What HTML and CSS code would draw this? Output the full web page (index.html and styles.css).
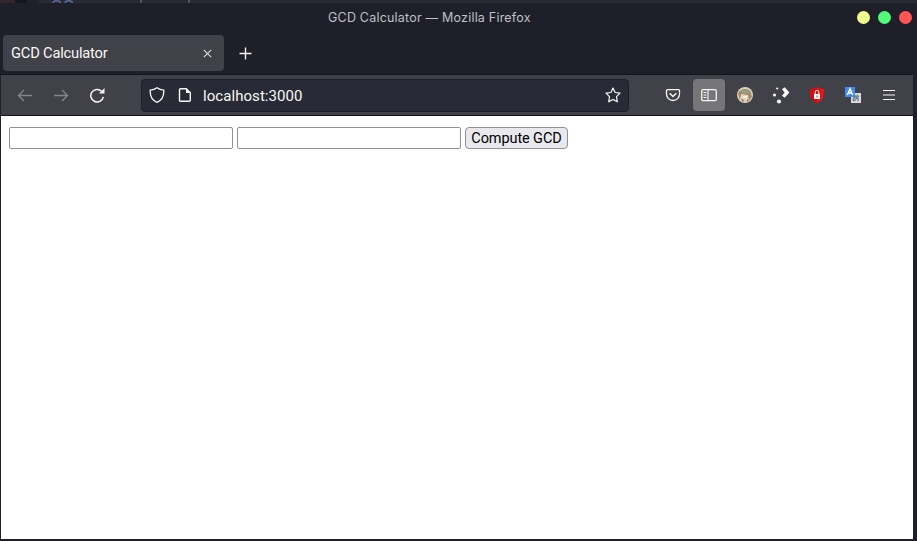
FILE: index.html
```html
<!DOCTYPE html>
<html lang="en">
<head>
<meta charset="utf-8">
<title>GCD Calculator</title>
<link rel="stylesheet" href="styles.css">
</head>
<body>
<div class="backdrop">
  <svg width="917" height="3" viewBox="0 0 917 3" fill="none">
    <rect width="15" height="3" fill="#35252a"/><rect x="15" width="12" height="3" fill="#15161b"/><rect x="27" width="12" height="3" fill="#20212b"/>
    <path d="M53 3c.5-3 7-3 7.500 0M65 3c.5-3 7-3 7.500 0" stroke="#5b6aa0" stroke-width="1.500"/>
    <path d="M141 0v3M189 0v3" stroke="#55564f" stroke-width="2"/>
  </svg>
</div>
<div class="window">
  <header class="titlebar">
    <span class="title">GCD Calculator — Mozilla Firefox</span>
    <div class="controls"><i class="dot yellow"></i><i class="dot green"></i><i class="dot red"></i></div>
  </header>
  <div class="tabs">
    <div class="tab"><span class="tab-label">GCD Calculator</span>
      <svg width="9" height="9" viewBox="0 0 9 9"><path d="M.8.8l7.400 7.400M8.200.8L.8 8.200" stroke="#dddddb" stroke-width="1.100"/></svg>
    </div>
    <svg class="plus" width="13" height="13" viewBox="0 0 13 13"><path d="M6.500 .5v12M.5 6.500h12" stroke="#f4f4f0" stroke-width="1.400"/></svg>
  </div>
  <nav class="toolbar">
    <div class="slot dim"><svg width="16" height="16" viewBox="0 0 16 16"><path d="M15 8.500H1.500M7 3L1.500 8.500 7 14"/></svg></div>
    <div class="slot dim"><svg width="16" height="16" viewBox="0 0 16 16"><path d="M1 8.500h13.500M9 3l5.500 5.500L9 14"/></svg></div>
    <div class="slot"><svg width="16" height="16" viewBox="0 0 16 16"><path d="M14.300 9.800A6.300 6.300 0 1 1 12.600 4.300" stroke-width="1.500"/><path d="M15.500 1v5.500H10z" fill="#f8f8f2" stroke="none"/></svg></div>
    <div class="urlbar">
      <svg width="16" height="16" viewBox="0 0 16 16"><path d="M8 .8C6 2.300 3.600 3 1.200 3.200 1 8.500 2.500 13.300 8 15.300c5.500-2 7-6.800 6.800-12.100C12.400 3 10 2.300 8 .8z" stroke-width="1.300"/></svg>
      <svg class="page-icon" width="16" height="16" viewBox="0 0 16 16"><path d="M3.500 1.700h5.800l4 4v7.600a1 1 0 0 1-1 1H3.500a1 1 0 0 1-1-1V2.700a1 1 0 0 1 1-1z" stroke-width="1.400"/><path d="M9 1.300V6h4.700z" fill="#f8f8f2" stroke="none"/></svg>
      <span class="url">localhost:3000</span>
      <svg class="star" width="16" height="16" viewBox="0 0 16 16"><path d="M8 1l2.100 4.500 4.900.7-3.500 3.500.8 5.100L8 12.400l-4.300 2.400.8-5.100L1 6.200l4.900-.7z" stroke-width="1.200" stroke-linejoin="round"/></svg>
    </div>
    <div class="actions">
      <div class="slot"><svg width="16" height="16" viewBox="0 0 16 16"><path d="M2.500 2.600h11a1 1 0 0 1 1 1V7a6.500 6.500 0 0 1-13 0V3.600a1 1 0 0 1 1-1z"/><path d="M4.700 6.300L8 9.500l3.300-3.200" stroke-width="1.500"/></svg></div>
      <div class="slot selected"><svg width="16" height="16" viewBox="0 0 16 16"><rect x=".7" y="2.700" width="14.600" height="11" rx="1.500"/><path d="M7 3v10.500M2.500 5.500h3M2.500 8h3M2.500 10.500h3" stroke-width="1.100"/></svg></div>
      <div class="slot"><svg width="16" height="16" viewBox="0 0 16 16" stroke="none"><circle cx="8" cy="8" r="8" fill="#ddd3bd"/><path d="M1 7C2 1 13 0 14 6l1 4-3 3-1-5-7-1-1 6z" fill="#a08b64"/><path d="M4 3h7l1 4-7-1z" fill="#8fa08a"/><path d="M5 8h6v3l-3 1-3-1z" fill="#e9cdb4"/><path d="M6 9h4v2H6z" fill="#fff2e2"/><path d="M4 12l3 1-1 2zM10 13l3-1-3 3z" fill="#955e3c"/></svg></div>
      <div class="slot"><svg width="18" height="17" viewBox="0 0 18 17" stroke="none"><g fill="#f8f8f2"><circle cx="5.200" cy="1.500" r="1.100"/><circle cx="2.500" cy="8" r="1.600"/><circle cx="7" cy="14.500" r="2.100"/><path d="M10 2.300l2.700-2 4.700 5.200-4.700 5.200-2.700-2 2.600-3.200z"/></g></svg></div>
      <div class="slot"><svg width="16" height="16" viewBox="0 0 16 16" stroke="none"><path d="M8 0c2 1.500 4.500 2 7 2 .3 7-1 11.500-7 14C2 13.500.7 9 1 2c2.500 0 5-.5 7-2z" fill="#ee1214"/><path d="M8 0v16C2 13.500.7 9 1 2c2.500 0 5-.5 7-2z" fill="#d90b0d"/><rect x="5" y="7" width="6" height="5" fill="#fff"/><path d="M6.200 7V5.200a1.800 1.800 0 0 1 3.600 0V7" fill="none" stroke="#fff" stroke-width="1"/><path d="M8 8.500v2" stroke="#e22" stroke-width="1"/></svg></div>
      <div class="slot"><svg width="16" height="16" viewBox="0 0 16 16" stroke="none"><rect x="6" y="6" width="10" height="10" fill="#d9dbda"/><path d="M8 10c2-2 5-1 3 2s-4 1-2-1 5 0 4 3M12 8l2 2" fill="none" stroke="#607d8b" stroke-width="1.300"/><rect width="10" height="10" fill="#4688f4"/><path d="M2.300 8L5 1.800 7.700 8M3.300 6h3.400" fill="none" stroke="#fff" stroke-width="1.400"/></svg></div>
      <div class="slot"><svg width="16" height="16" viewBox="0 0 16 16"><path d="M2 3.500h12M2 8h12M2 12.500h12" stroke-width="1.200"/></svg></div>
    </div>
  </nav>
  <main class="page">
    <form class="gcd-form">
      <input type="text" class="number"><input type="text" class="number"><button type="button" class="compute">Compute GCD</button>
    </form>
  </main>
</div>
</body>
</html>
```

FILE: styles.css
```css
* { box-sizing: border-box; }
body { margin: 0; width: 917px; height: 541px; overflow: hidden; background: #1e1f29; font-family: Roboto, sans-serif; }
svg { display: block; flex: none; }
.backdrop { height: 3px; background: #282a36; }
.window { width: 917px; height: 538px; background: #1e1f29; }
.titlebar { height: 32px; display: grid; grid-template-columns: 1fr auto; align-items: start; padding-right: 5px; }
.title { padding-left: 328px; padding-top: 5px; font: 12.500px/19px Inter, sans-serif; letter-spacing: 0.21px; color: #bfc0c8; white-space: nowrap; }
.controls { display: flex; gap: 8px; padding-top: 8px; }
.dot { width: 13px; height: 13px; border-radius: 50%; }
.yellow { background: #f1fa8c; }
.green { background: #50fa7b; }
.red { background: #ff5555; }
.tabs { height: 39px; display: flex; align-items: flex-start; padding-left: 3px; }
.tab { width: 221px; height: 36px; border-radius: 4px; background: #414149; display: flex; align-items: center; justify-content: space-between; padding: 0 12px 0 8px; }
.tab-label { font-size: 14.700px; letter-spacing: -0.2px; line-height: 20px; color: #f8f8f2; white-space: nowrap; }
.plus { margin: 12px 0 0 15px; }
.toolbar { width: 912px; height: 42px; margin-left: 1px; display: flex; align-items: center; background: #414149; border-top: 1px solid #14141d; border-bottom: 1px solid #171320; padding-left: 6px; }
.slot { width: 36px; height: 32px; display: flex; align-items: center; justify-content: center; }
.toolbar svg { fill: none; stroke: #f8f8f2; stroke-width: 1.300; }
.toolbar .dim svg { stroke: #85858a; }
.toolbar .actions svg[stroke="none"] { stroke: none; }
.urlbar { width: 488px; height: 33px; margin-left: 26px; border: 1px solid #1d1e28; border-radius: 4px; background: #282a36; display: flex; align-items: center; padding: 0 7px; }
.page-icon { margin-left: 12px; }
.url { margin-left: 10px; padding-top: 2px; font-size: 15px; letter-spacing: 0.060px; line-height: 20px; color: #f8f8f2; }
.star { margin-left: auto; }
.actions { display: flex; margin-left: 26px; }
.slot.selected { width: 32px; margin: 0 2px; background: #75757a; border-radius: 4px; }
.page { width: 912px; height: 423px; margin-left: 1px; background: #fff; padding: 11px 8px; }
.gcd-form { display: flex; gap: 4px; }
.number { width: 224px; height: 22px; margin: 0; padding: 1px 3px; border: 1px solid #8f8f9d; border-radius: 2px; background: #fff; outline: none; }
.compute { width: 103px; height: 22px; margin: 0; padding: 1px 0 0; border: 1px solid #8f8f9d; border-radius: 4px; background: #e9e9ed; color: #000; font: 14.500px/19px Roboto, sans-serif; letter-spacing: -0.1px; white-space: nowrap; }
```
